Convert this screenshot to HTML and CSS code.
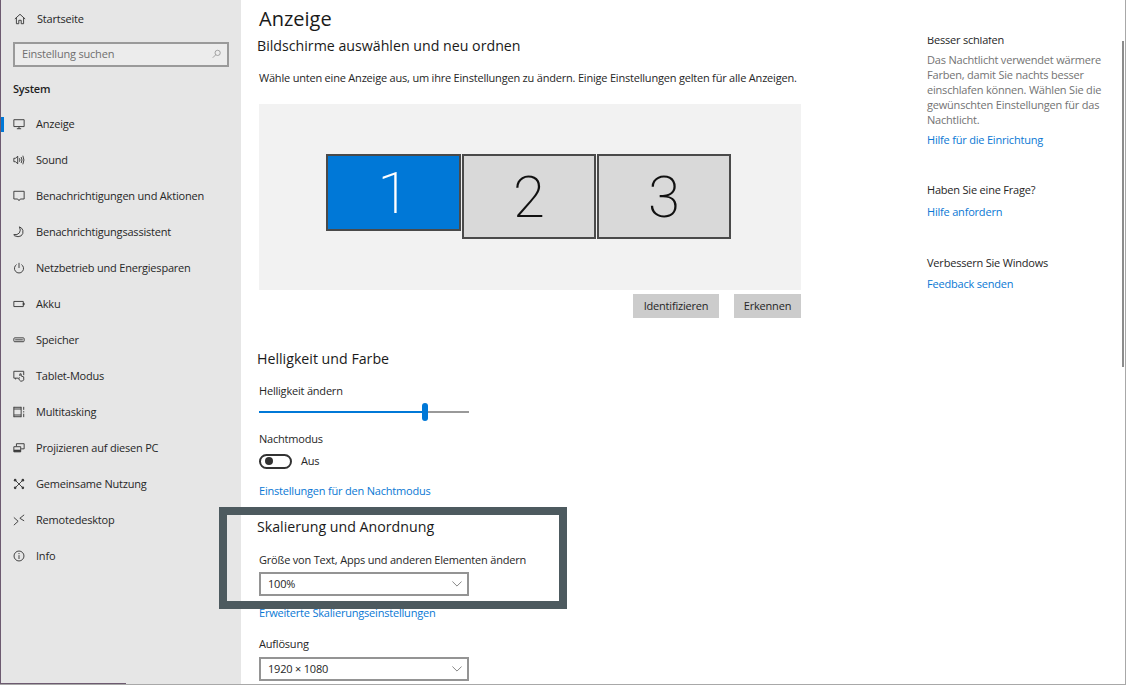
FILE: index.html
```html
<!DOCTYPE html>
<html lang="de">
<head>
<meta charset="utf-8">
<title>Anzeige</title>
<link rel="stylesheet" href="styles.css">
</head>
<body>
<div class="window">
  <nav class="sidebar">
    <a class="home">
      <svg class="icon" viewBox="0 0 14 14"><path d="M1 7 7 1.500 13 7M2.800 5.600V12.500H5.600V8.500H8.400V12.500H11.200V5.600"/></svg>
      <span>Startseite</span>
    </a>
    <div class="search">
      <span>Einstellung suchen</span>
      <svg class="search-icon" viewBox="0 0 12 12"><circle cx="7.500" cy="4.500" r="3.500"/><path d="M5 7 1 11"/></svg>
    </div>
    <div class="group">System</div>
    <ul class="menu">
      <li class="item active"><svg class="icon" viewBox="0 0 14 14"><path d="M1 2H13V10H1ZM7 10V12.500M4.500 12.500H9.500"/></svg><span>Anzeige</span></li>
      <li class="item"><svg class="icon" viewBox="0 0 14 14"><path d="M1 5H3L5.500 2.500V11.500L3 9H1ZM7.500 5Q8.700 7 7.500 9M9.500 3.500Q11.500 7 9.500 10.500M11.500 2Q14 7 11.500 12"/></svg><span>Sound</span></li>
      <li class="item"><svg class="icon" viewBox="0 0 14 14"><path d="M1 1.500H13V10.500H8.500L7 12.500 5.500 10.500H1Z"/></svg><span>Benachrichtigungen und Aktionen</span></li>
      <li class="item"><svg class="icon" viewBox="0 0 14 14"><path d="M7.500 1Q10.500 2 11.500 5 12.500 9 9.500 11.500 6 13.500 2 11.500 1 11 1 10 5 11 7.500 8 9.500 5 7.500 1Z"/></svg><span>Benachrichtigungsassistent</span></li>
      <li class="item"><svg class="icon" viewBox="0 0 14 14"><path d="M7 1V7M4.200 3A5.300 5.300 0 1 0 9.800 3"/></svg><span>Netzbetrieb und Energiesparen</span></li>
      <li class="item"><svg class="icon" viewBox="0 0 14 14"><path d="M1 4H12V10H1ZM12 6H13V8H12Z"/></svg><span>Akku</span></li>
      <li class="item"><svg class="icon" viewBox="0 0 14 14"><rect x="1" y="4.500" width="12" height="4.500" rx="1"/><path d="M2.500 6.800H11.500"/></svg><span>Speicher</span></li>
      <li class="item"><svg class="icon" viewBox="0 0 14 14"><path d="M6 9.500H1V1.500H12.500V6M3 9.500V11M8 7V4.500L9.500 4.500V7L12.500 8V11.500Q11.500 13.500 9 13 7 12 6.500 9.500L8 9"/></svg><span>Tablet-Modus</span></li>
      <li class="item"><svg class="icon" viewBox="0 0 14 14"><path d="M1 1V13M9.500 1V13M1 3.500H9.500M1 10.500H9.500M1 1.500H9.500M1 12.500H9.500M12.500 1V4.500M12.500 6V7.500M12.500 9V13"/></svg><span>Multitasking</span></li>
      <li class="item"><svg class="icon" viewBox="0 0 14 14"><path d="M4 5V2H13V8H9.500M1 5.500H9V11.500H1Z"/><path class="solid" d="M1 9H9V11.500H1Z"/></svg><span>Projizieren auf diesen PC</span></li>
      <li class="item"><svg class="icon" viewBox="0 0 14 14"><path d="M3 3 11 11M11 3 3 11"/><circle class="solid" cx="2.500" cy="2.500" r="1.500"/><circle class="solid" cx="11.500" cy="2.500" r="1.500"/><circle class="solid" cx="2.500" cy="11.500" r="1.500"/><circle class="solid" cx="11.500" cy="11.500" r="1.500"/></svg><span>Gemeinsame Nutzung</span></li>
      <li class="item"><svg class="icon" viewBox="0 0 14 14"><path d="M1 4 6 8.500 1 13M13 1 8 5 13 8"/></svg><span>Remotedesktop</span></li>
      <li class="item"><svg class="icon" viewBox="0 0 14 14"><circle cx="7" cy="7" r="5.800"/><path d="M7 6V10.500M7 3.500V4.800"/></svg><span>Info</span></li>
    </ul>
  </nav>

  <main class="content">
    <h1>Anzeige</h1>
    <h2 class="h-first">Bildschirme auswählen und neu ordnen</h2>
    <p class="intro">Wähle unten eine Anzeige aus, um ihre Einstellungen zu ändern. Einige Einstellungen gelten für alle Anzeigen.</p>
    <div class="canvas">
      <div class="monitor selected">1</div>
      <div class="monitor tall">2</div>
      <div class="monitor tall">3</div>
    </div>
    <div class="actions">
      <button class="btn btn-id">Identifizieren</button>
      <button class="btn btn-de">Erkennen</button>
    </div>

    <h2 class="h-bright">Helligkeit und Farbe</h2>
    <div class="label l-bright">Helligkeit ändern</div>
    <div class="slider"><div class="fill"></div><div class="thumb"></div><div class="rest"></div></div>
    <div class="label l-night">Nachtmodus</div>
    <div class="toggle-row"><span class="toggle"><span class="knob"></span></span><span>Aus</span></div>
    <a class="link l-nightlink">Einstellungen für den Nachtmodus</a>

    <h2 class="h-scale">Skalierung und Anordnung</h2>
    <div class="label l-size">Größe von Text, Apps und anderen Elementen ändern</div>
    <div class="select s-size"><span>100%</span><svg class="chev" viewBox="0 0 12 7"><path d="M.5.5 6 6 11.500.5"/></svg></div>
    <a class="link l-adv">Erweiterte Skalierungseinstellungen</a>
    <div class="label l-res">Auflösung</div>
    <div class="select"><span>1920 × 1080</span><svg class="chev" viewBox="0 0 12 7"><path d="M.5.5 6 6 11.500.5"/></svg></div>
  </main>

  <aside class="aside">
    <div class="clip"><h3 class="clipped">Besser schlafen</h3></div>
    <p class="muted">Das Nachtlicht verwendet wärmere Farben, damit Sie nachts besser einschlafen können. Wählen Sie die gewünschten Einstellungen für das Nachtlicht.</p>
    <a class="link">Hilfe für die Einrichtung</a>
    <h3 class="a-q">Haben Sie eine Frage?</h3>
    <a class="link a-help">Hilfe anfordern</a>
    <h3 class="a-w">Verbessern Sie Windows</h3>
    <a class="link">Feedback senden</a>
  </aside>

  <div class="scrollbar"></div>
  <div class="edge"></div>
  <div class="highlight"></div>
</div>
</body>
</html>
```

FILE: styles.css
```css
* { box-sizing: border-box; }
html, body { margin: 0; height: 100%; overflow: hidden; }
body {
  background: #fff;
  color: #1a1a1a;
  font-family: "Open Sans", "Noto Sans", sans-serif;
  font-size: 11px;
  letter-spacing: -0.2px;
  line-height: 16px;
}
.window {
  position: relative;
  display: flex;
  width: 1126px;
  height: 685px;
  overflow: hidden;
  border-right: 1px solid #a8a8a8;
  border-bottom: 1px solid #a8a8a8;
}
/* Sidebar */
.sidebar {
  flex: none;
  width: 241px;
  background: #e6e6e6;
  border-left: 1px solid #6d5a70;
  padding: 11px 0 0 12px;
}
.home, .item { display: flex; align-items: center; color: #262626; }
.home { height: 16px; padding-left: 1px; }
.icon {
  flex: none;
  width: 12px;
  height: 12px;
  margin-right: 11px;
  fill: none;
  stroke: #3a3a3a;
  stroke-width: 1.100;
}
.icon .solid { fill: #3a3a3a; stroke: none; }
.search {
  display: flex;
  align-items: center;
  justify-content: space-between;
  width: 216px;
  height: 25px;
  margin-top: 15px;
  padding: 0 6px 1px 7px;
  background: #ececec;
  border: 2px solid #9a9a9a;
  color: #6f6f6f;
}
.search-icon { width: 9px; height: 10px; fill: none; stroke: #8a8a8a; stroke-width: 1; }
.group { margin-top: 14px; font-weight: 600; color: #1f1f1f; }
.menu { list-style: none; margin: 9px 0 0; padding: 0; }
.item { position: relative; height: 36px; }
.active::before {
  content: "";
  position: absolute;
  left: -12px;
  top: 11px;
  width: 3px;
  height: 15px;
  background: #0078d7;
}
/* Main column */
.content { flex: none; width: 670px; padding: 6px 0 0 18px; }
h1 { margin: 0; font-size: 20px; line-height: 25px; font-weight: 400; letter-spacing: 0; }
h2 { margin: 0 0 0 -2px; font-size: 14.200px; line-height: 20px; font-weight: 400; letter-spacing: 0; color: #1a1a1a; }
.h-first { margin-top: 5px; }
.intro { margin: 14px 0 0; color: #262626; white-space: nowrap; }
.canvas {
  display: flex;
  align-items: flex-start;
  gap: 1px;
  width: 542px;
  height: 186px;
  margin-top: 18px;
  padding: 50px 0 0 67px;
  background: #f2f2f2;
}
.monitor {
  display: flex;
  align-items: center;
  justify-content: center;
  width: 134px;
  height: 85px;
  border: 2px solid #4a4a4a;
  background: #d9d9d9;
  color: #111;
  font-family: Roboto, "Open Sans", sans-serif;
  font-size: 58px;
  font-weight: 200;
  letter-spacing: 0;
  line-height: 1;
}
.monitor.selected { width: 135px; height: 77px; background: #0078d7; color: #fff; }
.actions { display: flex; justify-content: flex-end; gap: 15px; width: 542px; margin-top: 4px; }
.btn {
  height: 24px;
  padding: 0;
  border: 0;
  background: #cccccc;
  color: #262626;
  font: inherit;
  letter-spacing: inherit;
}
.btn-id { width: 86px; }
.btn-de { width: 67px; }
.h-bright { margin-top: 31px; }
.label { color: #262626; }
.l-bright { margin-top: 14px; }
.slider { position: relative; display: flex; align-items: center; width: 210px; height: 18px; margin-top: 4px; }
.fill { width: 164px; height: 2px; background: #0078d7; }
.rest { flex: 1; height: 2px; background: #999; }
.thumb { flex: none; width: 6px; height: 18px; border-radius: 3px; background: #0078d7; margin-left: -1px; }
.l-night { margin-top: 10px; }
.toggle-row { display: flex; align-items: center; gap: 9px; margin-top: 6px; height: 16px; color: #262626; }
.toggle {
  display: flex;
  align-items: center;
  width: 33px;
  height: 15px;
  padding-left: 4px;
  border: 2px solid #333;
  border-radius: 8px;
}
.knob { width: 8px; height: 8px; border-radius: 50%; background: #333; }
.link { display: block; color: #0a78d4; }
.l-nightlink { margin-top: 14px; }
.h-scale { margin-top: 18px; }
.l-size { margin-top: 15px; }
.select {
  display: flex;
  align-items: center;
  justify-content: space-between;
  width: 210px;
  height: 24px;
  margin-top: 5px;
  padding: 0 5px 0 7px;
  border: 2px solid #949494;
  background: #fff;
  color: #262626;
}
.select.s-size { margin-top: 4px; }
.chev { width: 10px; height: 6px; fill: none; stroke: #6f6f6f; stroke-width: 1; }
.l-adv { margin-top: 9px; }
.l-res { margin-top: 15px; }
/* Right column */
.aside { flex: none; width: 190px; padding: 37px 0 0 16px; }
.clip { height: 9px; overflow: hidden; }
h3 { margin: 0; font-size: inherit; line-height: 16px; font-weight: 400; color: #262626; }
.clipped { margin-top: -5px; }
.muted { margin: 6px 0 0; line-height: 15px; color: #737373; width: 178px; }
.aside .link { margin-top: 5px; }
.aside .a-help { margin-top: 6px; }
.a-q { margin-top: 34px; }
.a-w { margin-top: 35px; }
/* Overlays */
.scrollbar {
  position: absolute;
  left: 1122px;
  top: 41px;
  width: 2px;
  height: 326px;
  background: #8c8c8c;
}
.edge {
  position: absolute;
  left: 0;
  bottom: 0;
  width: 126px;
  height: 1px;
  background: #6d5a70;
}
.highlight {
  position: absolute;
  left: 219px;
  top: 507px;
  width: 348px;
  height: 102px;
  border: 8px solid #4d5a5f;
  pointer-events: none;
}
```
